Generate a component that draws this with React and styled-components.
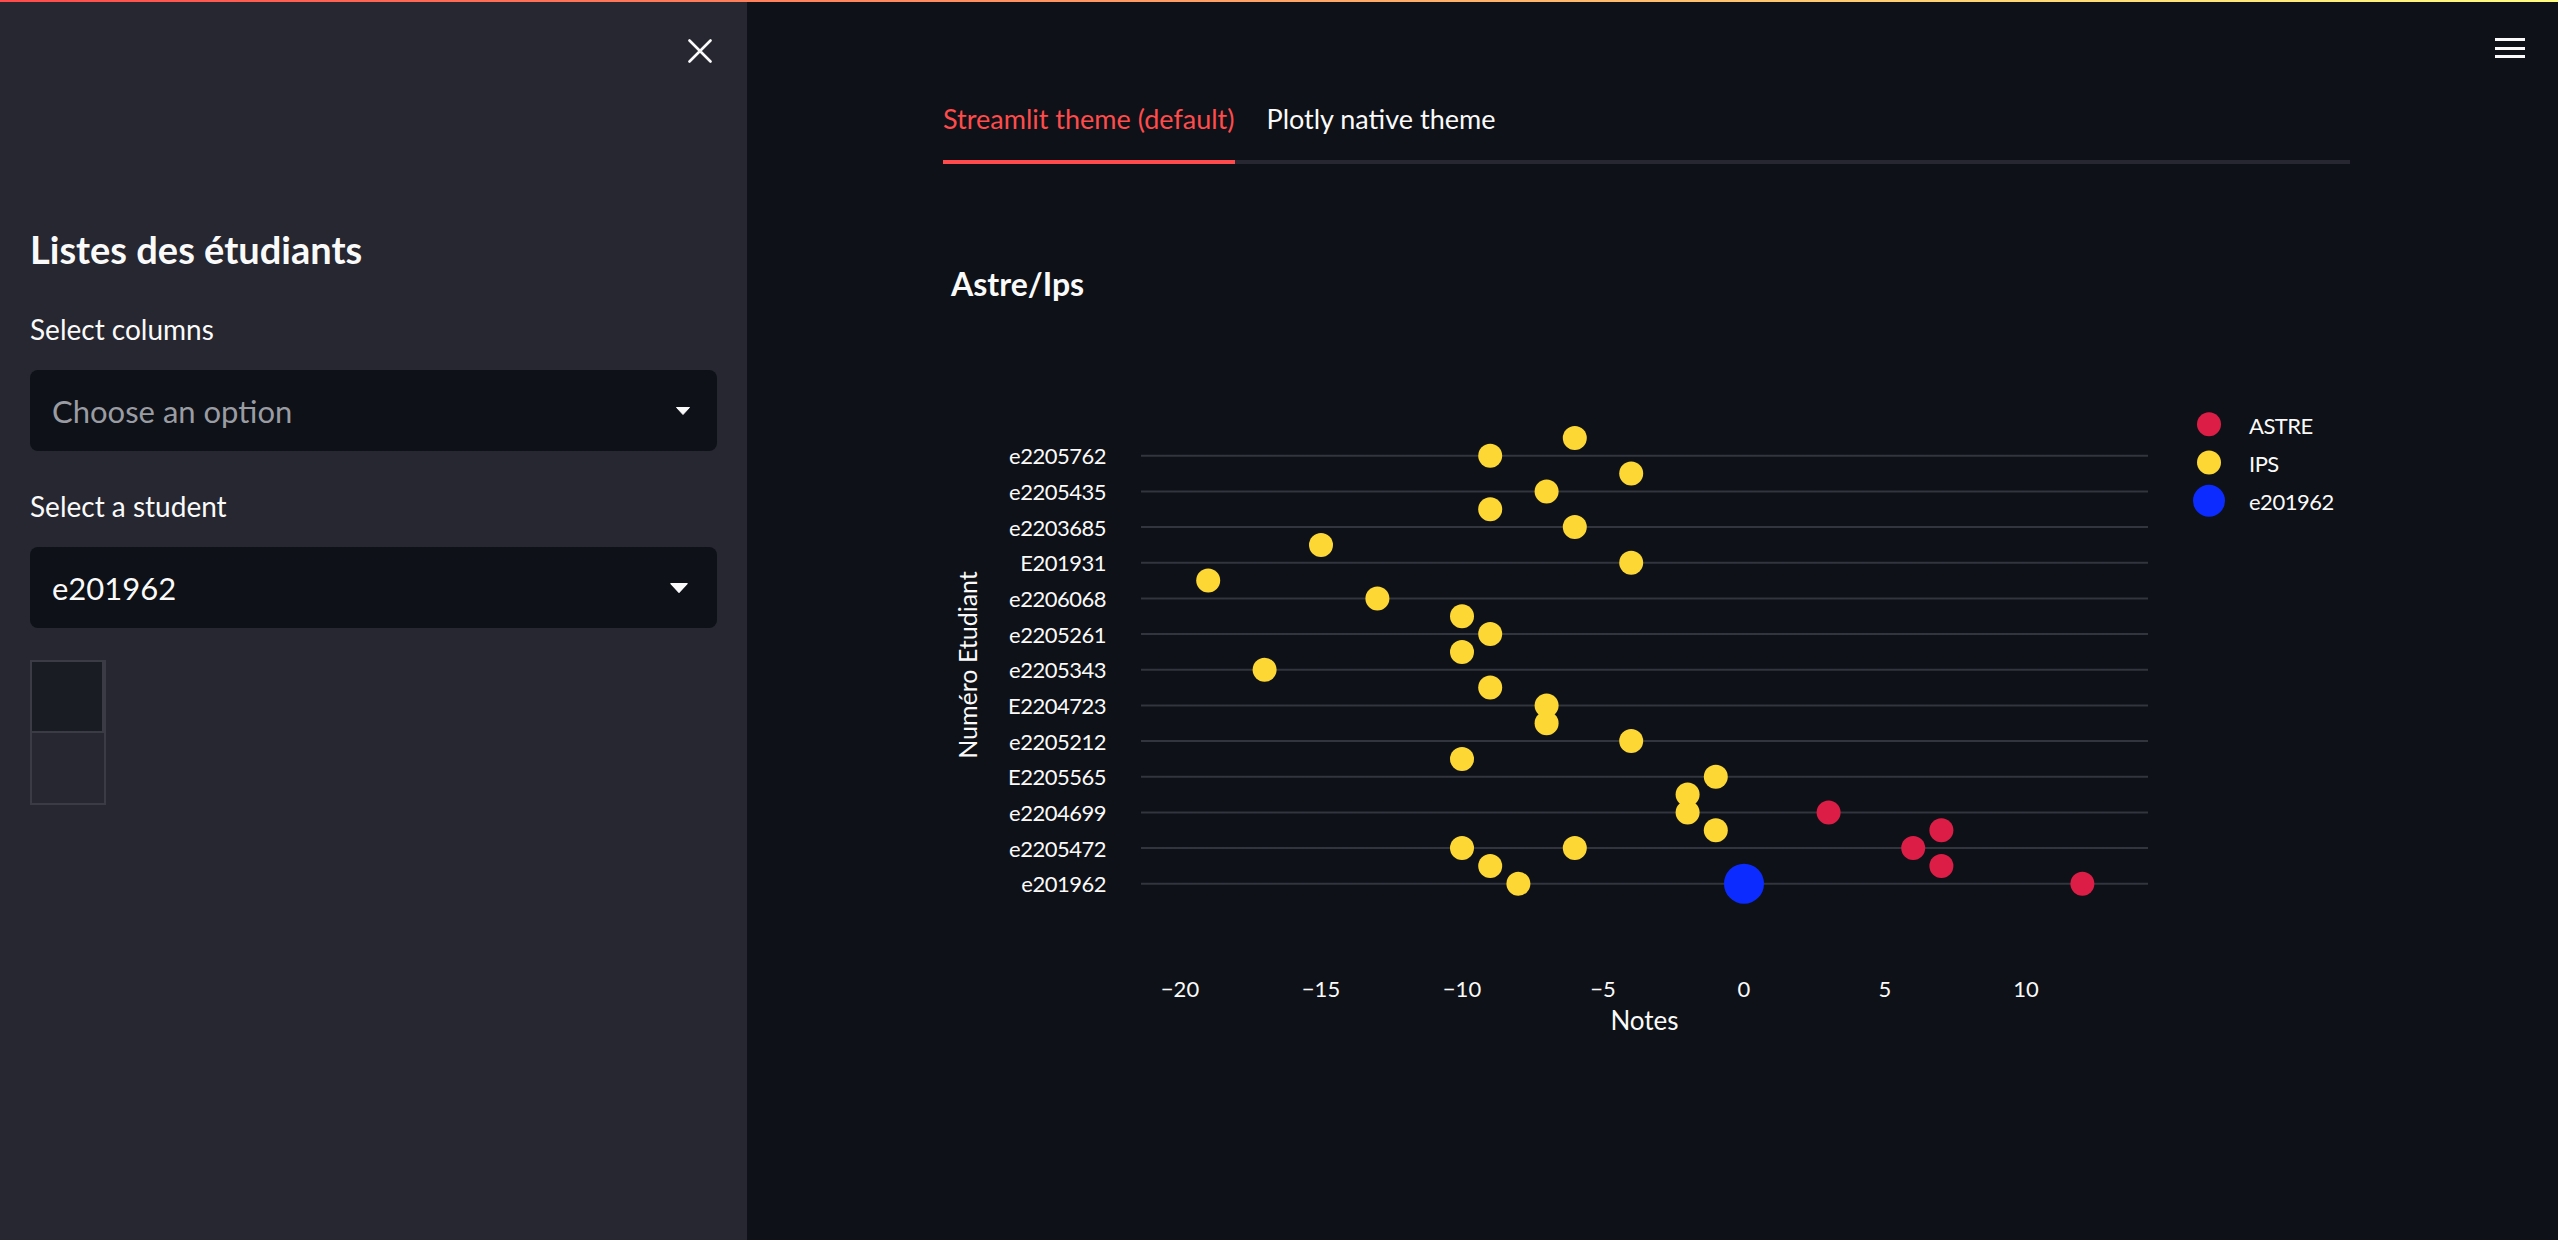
import styled, { createGlobalStyle } from 'styled-components';

const GlobalStyle = createGlobalStyle`
  html, body {
    margin: 0;
    padding: 0;
    background: #0e1117;
  }
  body {
    font-family: Lato, "Noto Sans", sans-serif;
    color: #fafafa;
  }
  * { box-sizing: border-box; }
`;

const Page = styled.div`
  width: 2558px;
  height: 1240px;
  display: flex;
  flex-direction: column;
  overflow: hidden;
  background: #0e1117;
`;

const Decoration = styled.div`
  height: 2px;
  flex-shrink: 0;
  background: linear-gradient(90deg, #ff4b4b, #fffd80);
`;

const Body = styled.div`
  flex: 1;
  display: flex;
  min-height: 0;
`;

const Sidebar = styled.aside`
  width: 747px;
  flex-shrink: 0;
  background: #262730;
  padding: 0 30px;
  display: flex;
  flex-direction: column;
`;

const SidebarHeader = styled.div`
  height: 100px;
  display: flex;
  justify-content: flex-end;
  align-items: flex-start;
  padding: 37px 5px 0 0;
`;

const IconButton = styled.button`
  background: none;
  border: 0;
  padding: 0;
  display: flex;
  cursor: pointer;
  color: #fafafa;
`;

const SidebarTitle = styled.h2`
  margin: 123px 0 0;
  font-size: 38px;
  line-height: 48px;
  font-weight: 700;
  color: #fafafa;
`;

const FieldLabel = styled.label`
  display: block;
  margin-top: ${p => p.$gap}px;
  font-size: 28px;
  line-height: 32px;
  color: #fafafa;
`;

const SelectBox = styled.div`
  margin-top: 25px;
  height: 81px;
  background: #0e1117;
  border-radius: 8px;
  display: flex;
  align-items: center;
  justify-content: space-between;
  padding: 0 ${p => p.$right}px 0 22px;
  font-size: 31px;
  color: ${p => (p.$placeholder ? '#9a9ca3' : '#fafafa')};
`;

const EmptyTable = styled.div`
  margin-top: 32px;
  width: 76px;
  height: 145px;
  border: 2px solid #3a3b45;
  display: grid;
  grid-template-rows: 1fr 1fr;
`;

const HeaderCell = styled.div`
  background: #1a1c24;
  border-bottom: 2px solid #3a3b45;
  border-right: 2px solid #3a3b45;
`;

const Main = styled.main`
  flex: 1;
  display: flex;
  flex-direction: column;
  min-width: 0;
`;

const TopBar = styled.div`
  height: 82px;
  display: flex;
  justify-content: flex-end;
  padding: 36px 33px 0 0;
`;

const Hamburger = styled.span`
  width: 30px;
  height: 20px;
  display: flex;
  flex-direction: column;
  justify-content: space-between;
  span {
    display: block;
    height: 3px;
    background: #fafafa;
  }
`;

const Content = styled.div`
  margin-left: 196px;
  width: 1407px;
`;

const TabList = styled.div`
  display: flex;
  gap: 32px;
  border-bottom: 4px solid #262730;
`;

const Tab = styled.button`
  background: none;
  border: 0;
  border-bottom: 4px solid ${p => (p.$active ? '#ff4b4b' : 'transparent')};
  margin-bottom: -4px;
  padding: 15px 0 21px;
  font-family: inherit;
  font-size: 27px;
  line-height: 40px;
  color: ${p => (p.$active ? '#ff4b4b' : '#fafafa')};
  cursor: pointer;
`;

const ChartSvg = styled.svg`
  display: block;
  font-family: Lato, "Noto Sans", sans-serif;
  fill: #fafafa;
`;

const colors = { astre: '#dc1e46', ips: '#fdd835', me: '#0c2cff' };

const students = [
  'e2205762', 'e2205435', 'e2203685', 'E201931', 'e2206068', 'e2205261', 'e2205343',
  'E2204723', 'e2205212', 'E2205565', 'e2204699', 'e2205472', 'e201962',
];

// [half-row index, note, group]
const points = [
  [0, -6, 'ips'], [1, -9, 'ips'], [2, -4, 'ips'], [3, -7, 'ips'], [4, -9, 'ips'],
  [5, -6, 'ips'], [6, -15, 'ips'], [7, -4, 'ips'], [8, -19, 'ips'], [9, -13, 'ips'],
  [10, -10, 'ips'], [11, -9, 'ips'], [12, -10, 'ips'], [13, -17, 'ips'], [14, -9, 'ips'],
  [15, -7, 'ips'], [16, -7, 'ips'], [17, -4, 'ips'], [18, -10, 'ips'], [19, -1, 'ips'],
  [20, -2, 'ips'], [21, -2, 'ips'], [22, -1, 'ips'], [23, -10, 'ips'], [23, -6, 'ips'],
  [24, -9, 'ips'], [25, -8, 'ips'],
  [21, 3, 'astre'], [22, 7, 'astre'], [23, 6, 'astre'], [24, 7, 'astre'], [25, 12, 'astre'],
  [25, 0, 'me'],
];

const legend = [
  { key: 'astre', label: 'ASTRE', r: 12 },
  { key: 'ips', label: 'IPS', r: 12 },
  { key: 'me', label: 'e201962', r: 16 },
];

const PLOT_X0 = 198;
const PLOT_X1 = 1205;
const xOf = v => 801 + 28.2 * v;
const yOf = k => 273.9 + 17.833 * k;

function Chart() {
  return (
    <ChartSvg width="1407" height="900" viewBox="0 0 1407 900">
      <text x="8" y="119" fontSize="32" fontWeight="700" dominantBaseline="central">Astre/Ips</text>

      {students.map((s, i) => (
        <g key={s}>
          <line x1={PLOT_X0} x2={PLOT_X1} y1={yOf(2 * i + 1)} y2={yOf(2 * i + 1)} stroke="#33353e" strokeWidth="2" />
          <text x="163" y={yOf(2 * i + 1)} fontSize="22" letterSpacing="-0.5" textAnchor="end" dominantBaseline="central">{s}</text>
        </g>
      ))}

      <text
        x="0"
        y="0"
        fontSize="25"
        textAnchor="middle"
        dominantBaseline="central"
        transform="translate(24 501) rotate(-90)"
      >
        Numéro Etudiant
      </text>

      {[-20, -15, -10, -5, 0, 5, 10].map(v => (
        <text key={v} x={xOf(v)} y="824" fontSize="22" textAnchor="middle" dominantBaseline="central">
          {v < 0 ? `\u2212${-v}` : v}
        </text>
      ))}
      <text x={(PLOT_X0 + PLOT_X1) / 2} y="856" fontSize="26" textAnchor="middle" dominantBaseline="central">Notes</text>

      {points.map(([k, v, g], i) => (
        <circle key={i} cx={xOf(v)} cy={yOf(k)} r={g === 'me' ? 20 : 12} fill={colors[g]} />
      ))}

      {legend.map((item, i) => (
        <g key={item.key}>
          <circle cx="1266" cy={260.3 + 38.2 * i} r={item.r} fill={colors[item.key]} />
          <text x="1306" y={261 + 38 * i} fontSize="22" letterSpacing="-0.5" dominantBaseline="central">{item.label}</text>
        </g>
      ))}
    </ChartSvg>
  );
}

function Caret({ w, h }) {
  return (
    <svg width={w} height={h} viewBox="0 0 14 8">
      <path d="M0.5 0.5 L13.5 0.5 L7 7.5 Z" fill="#fafafa" stroke="#fafafa" strokeLinejoin="round" />
    </svg>
  );
}

export default function App() {
  return (
    <>
      <GlobalStyle />
      <Page>
        <Decoration />
        <Body>
          <Sidebar>
            <SidebarHeader>
              <IconButton aria-label="Close sidebar">
                <svg width="24" height="24" viewBox="0 0 24 24">
                  <path d="M1.5 1.5 L22.5 22.5 M22.5 1.5 L1.5 22.5" stroke="#fafafa" strokeWidth="2.6" strokeLinecap="round" />
                </svg>
              </IconButton>
            </SidebarHeader>
            <SidebarTitle>Listes des étudiants</SidebarTitle>
            <FieldLabel $gap={40}>Select columns</FieldLabel>
            <SelectBox $placeholder $right={27}>
              <span>Choose an option</span>
              <Caret w={14} h={8} />
            </SelectBox>
            <FieldLabel $gap={39}>Select a student</FieldLabel>
            <SelectBox $right={29}>
              <span>e201962</span>
              <Caret w={18} h={10} />
            </SelectBox>
            <EmptyTable>
              <HeaderCell />
              <div />
            </EmptyTable>
          </Sidebar>
          <Main>
            <TopBar>
              <Hamburger>
                <span />
                <span />
                <span />
              </Hamburger>
            </TopBar>
            <Content>
              <TabList>
                <Tab $active>Streamlit theme (default)</Tab>
                <Tab>Plotly native theme</Tab>
              </TabList>
              <Chart />
            </Content>
          </Main>
        </Body>
      </Page>
    </>
  );
}
